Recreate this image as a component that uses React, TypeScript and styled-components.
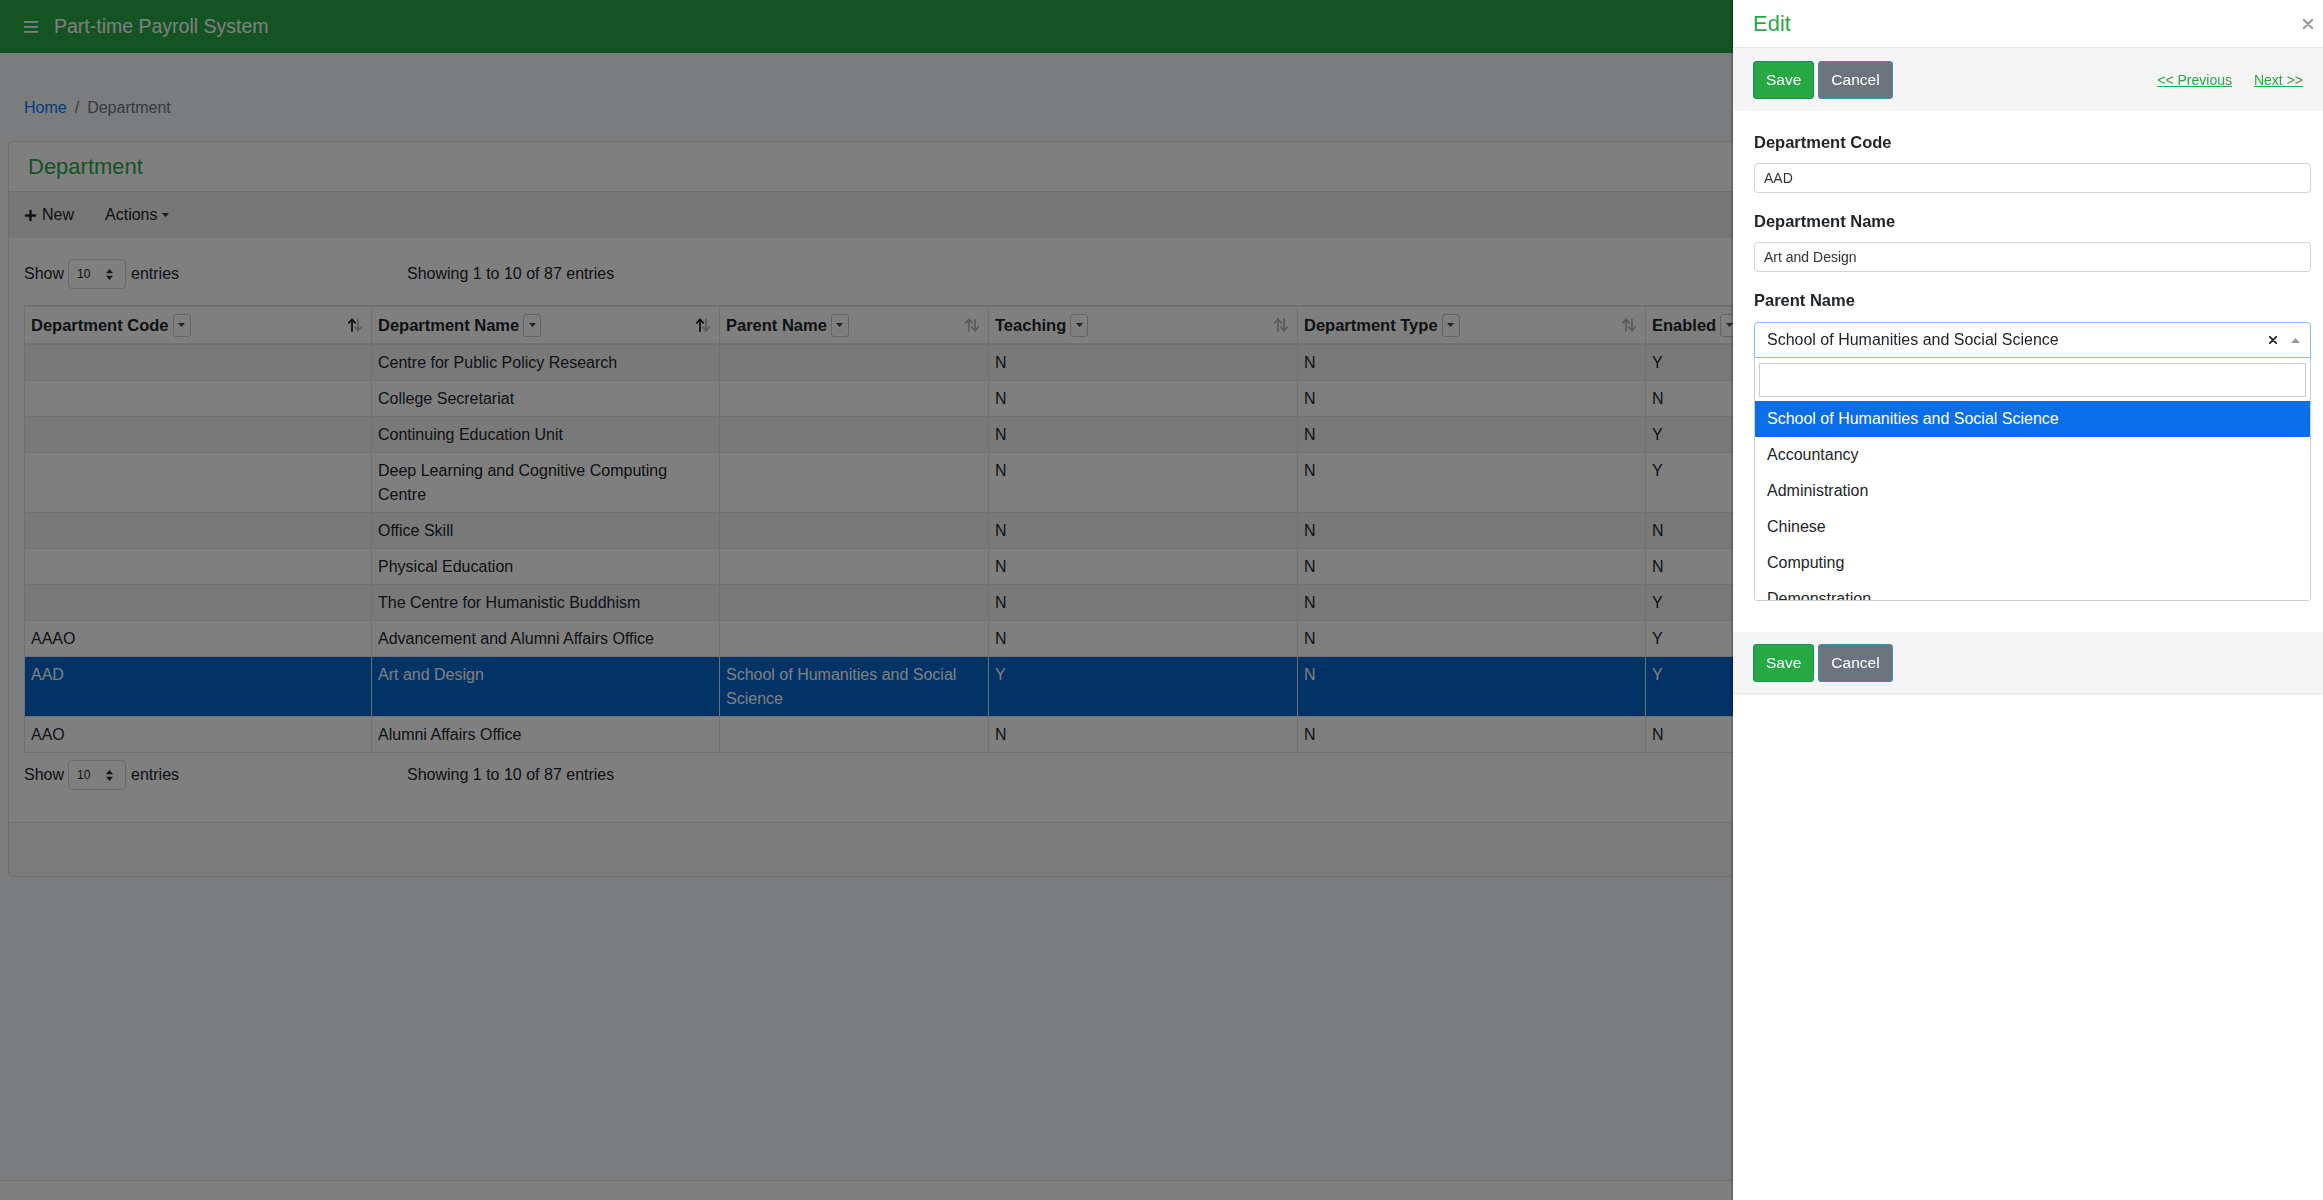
import React from 'react';
import styled, { createGlobalStyle } from 'styled-components';
import { FaPlus } from 'react-icons/fa';

const GlobalStyle = createGlobalStyle`
  html, body {
    margin: 0;
    padding: 0;
  }
  body {
    font-family: "Liberation Sans", Arial, Helvetica, sans-serif;
    font-size: 16px;
    color: #212529;
    background: #f6f8fc;
  }
  * {
    box-sizing: border-box;
  }
`;

const Page = styled.div`
  min-height: 1200px;
  display: flex;
  flex-direction: column;
`;

const TopBar = styled.header`
  height: 53px;
  flex-shrink: 0;
  display: flex;
  align-items: center;
  gap: 16px;
  padding-left: 24px;
  background: #28a745;
  color: #fff;
`;

const Title = styled.div`
  font-size: 19.5px;
  color: #fff;
`;

const Main = styled.main`
  flex: 1;
  padding: 0 8px;
`;

const Breadcrumb = styled.nav`
  display: flex;
  align-items: center;
  padding: 43px 16px 12px;
  margin-bottom: 9px;
  line-height: 24px;
  color: #6c757d;

  a {
    color: #007bff;
    text-decoration: none;
  }
  .sep {
    padding: 0 8px;
  }
`;

const Card = styled.section`
  background: #fff;
  border: 1px solid rgba(0, 0, 0, 0.125);
  border-radius: 4px;
  overflow: hidden;
`;

const CardHeader = styled.div`
  height: 50px;
  display: flex;
  align-items: center;
  padding: 0 19px;
  border-bottom: 1px solid rgba(0, 0, 0, 0.125);
  font-size: 22px;
  color: #28a745;
`;

const Toolbar = styled.div`
  height: 46px;
  display: flex;
  align-items: center;
  gap: 31px;
  padding: 0 15px;
  background: #eeeeee;
`;

const ToolButton = styled.span`
  display: inline-flex;
  align-items: center;
  gap: 5px;
  color: #222;
  font-size: 16px;
`;

const CardBody = styled.div`
  padding: 21px 15px 32px;
`;

const CardFooter = styled.div`
  height: 54px;
  background: #f7f7f7;
  border-top: 1px solid rgba(0, 0, 0, 0.08);
`;

const LengthRow = styled.div<{ $gap: number }>`
  display: grid;
  grid-template-columns: 383px 1fr;
  align-items: center;
  height: 30px;
  margin-top: ${(p) => p.$gap}px;
  font-size: 16px;
`;

const LengthLeft = styled.div`
  display: flex;
  align-items: center;
  gap: 4px;

  .after {
    margin-left: 1px;
  }
`;

const LengthSelect = styled.div`
  width: 58px;
  height: 30px;
  display: flex;
  align-items: center;
  justify-content: space-between;
  padding: 0 12px 0 8px;
  border: 1px solid #ced4da;
  border-radius: 4px;
  background: #fff;
  font-size: 12px;
`;

const Table = styled.table`
  width: 100%;
  margin-top: 16px;
  table-layout: fixed;
  border-collapse: collapse;
  font-size: 16px;
  line-height: 24px;
`;

const Th = styled.th`
  padding: 6px 8px 6px 6px;
  border: 1px solid #dee2e6;
  border-top: 2px solid #dee2e6;
  border-bottom: 2px solid #dee2e6;
  text-align: left;
  font-size: 16.5px;
  font-weight: bold;
  vertical-align: middle;
  background: #fff;
  white-space: nowrap;
`;

const ThInner = styled.div`
  display: flex;
  align-items: center;
  gap: 4px;
`;

const FilterBox = styled.span`
  width: 18px;
  height: 23px;
  flex-shrink: 0;
  display: inline-flex;
  align-items: center;
  justify-content: center;
  border: 1px solid #c8c8c8;
  border-radius: 3px;
`;

const SortSlot = styled.span`
  margin-left: auto;
  display: inline-flex;
`;

const Tr = styled.tr<{ $striped?: boolean; $selected?: boolean }>`
  background: ${(p) => (p.$selected ? '#0466cc' : p.$striped ? '#f3f3f3' : '#fff')};
  color: ${(p) => (p.$selected ? '#fff' : '#212529')};
`;

const Td = styled.td`
  padding: 5.5px 6px;
  border: 1px solid #dee2e6;
  vertical-align: top;
`;

const PageFooter = styled.footer`
  height: 20px;
  background: #fff;
  border-top: 1px solid #dee2e6;
`;

const Overlay = styled.div`
  position: fixed;
  inset: 0;
  background: rgba(0, 0, 0, 0.5);
  z-index: 10;
`;

const Panel = styled.aside`
  position: fixed;
  top: 0;
  right: 0;
  width: 590px;
  height: 100vh;
  background: #fff;
  z-index: 20;
  display: flex;
  flex-direction: column;
  box-shadow: -1px 0 2px rgba(0, 0, 0, 0.35);
`;

const PanelHeader = styled.div`
  height: 48px;
  flex-shrink: 0;
  display: flex;
  align-items: center;
  justify-content: space-between;
  padding: 0 10px 0 20px;
  border-bottom: 1px solid #e5e5e5;
  font-size: 22px;
  color: #28a745;
`;

const PanelBar = styled.div<{ $height: number }>`
  height: ${(p) => p.$height}px;
  flex-shrink: 0;
  display: flex;
  align-items: center;
  justify-content: space-between;
  padding: 0 20px;
  background: #f5f5f5;
`;

const FooterBar = styled(PanelBar)`
  box-shadow: 0 1px 2px rgba(0, 0, 0, 0.15);
`;

const ButtonGroup = styled.div`
  display: flex;
  gap: 4px;
`;

const Button = styled.button<{ $variant: 'save' | 'cancel' }>`
  height: 38px;
  padding: 0 12px;
  border-radius: 3px;
  border: 1px solid ${(p) => (p.$variant === 'save' ? '#1f8f63' : '#3f8db5')};
  background: ${(p) => (p.$variant === 'save' ? '#28a745' : '#6c757d')};
  color: #fff;
  font-family: inherit;
  font-size: 15.5px;
`;

const NavLinks = styled.div`
  display: flex;
  gap: 22px;
  font-size: 14px;

  a {
    color: #28a745;
    text-decoration: underline;
  }
`;

const PanelBody = styled.div`
  min-height: 521px;
  flex-shrink: 0;
  padding: 20px 12px 20px 21px;
`;

const Field = styled.div`
  margin-bottom: 17px;
`;

const Label = styled.label<{ $tight?: boolean }>`
  display: block;
  font-size: 16.5px;
  font-weight: bold;
  line-height: 22px;
  color: #212529;
  margin-bottom: ${(p) => (p.$tight ? 0 : 10)}px;
`;

const TextInput = styled.div`
  height: 30px;
  display: flex;
  align-items: center;
  padding: 0 9px;
  border: 1px solid #ced4da;
  border-radius: 4px;
  font-size: 14px;
  color: #333;
`;

const SelectWrap = styled.div`
  position: relative;
  margin-top: 11px;
`;

const SelectBox = styled.div`
  height: 36px;
  display: flex;
  align-items: center;
  gap: 14px;
  padding: 0 10px 0 12px;
  border: 1px solid #80bdff;
  border-radius: 4px 4px 0 0;
  font-size: 16px;
  color: #212529;

  .value {
    flex: 1;
  }
`;

const Dropdown = styled.div`
  position: absolute;
  top: 100%;
  left: 0;
  right: 0;
  z-index: 5;
  background: #fff;
  border: 1px solid #c9ced6;
  border-top: none;
  border-radius: 0 0 4px 4px;
  padding-top: 5px;
`;

const Search = styled.div`
  height: 34px;
  margin: 0 4px 4px;
  border: 1px solid #c9ccd2;
`;

const OptionList = styled.ul`
  list-style: none;
  margin: 0;
  padding: 0;
  height: 199px;
  overflow: hidden;
`;

const Option = styled.li<{ $active?: boolean }>`
  padding: 6px 12px;
  line-height: 24px;
  font-size: 16px;
  background: ${(p) => (p.$active ? '#0a6ee8' : '#fff')};
  color: ${(p) => (p.$active ? '#fff' : '#212529')};
`;

const Hamburger = () => (
  <svg width="14" height="12" viewBox="0 0 14 12">
    <rect x="0" y="0" width="14" height="1.8" fill="#fff" />
    <rect x="0" y="5" width="14" height="1.8" fill="#fff" />
    <rect x="0" y="10" width="14" height="1.8" fill="#fff" />
  </svg>
);

const Caret = ({ color = '#444' }: { color?: string }) => (
  <svg width="7" height="4" viewBox="0 0 7 4">
    <path d="M0 0 L7 0 L3.5 4 Z" fill={color} />
  </svg>
);

const SortIcon = ({ active }: { active: boolean }) => (
  <svg width="16" height="14" viewBox="0 0 16 14">
    <g fill="none" strokeWidth="1.8" strokeLinecap="round" strokeLinejoin="round">
      <g stroke={active ? '#222' : '#b5b5b5'}>
        <path d="M5 13 L5 1.5" />
        <path d="M1.8 4.8 L5 1.4 L8.2 4.8" />
      </g>
      <g stroke="#b5b5b5">
        <path d="M11 1.5 L11 12.5" />
        <path d="M7.8 9.2 L11 12.6 L14.2 9.2" />
      </g>
    </g>
  </svg>
);

const UpDown = () => (
  <svg width="7" height="11" viewBox="0 0 7 11">
    <path d="M0 4.2 L3.5 0 L7 4.2 Z" fill="#333" />
    <path d="M0 6.8 L3.5 11 L7 6.8 Z" fill="#333" />
  </svg>
);

const CloseIcon = ({ size, color }: { size: number; color: string }) => (
  <svg width={size} height={size} viewBox="0 0 10 10">
    <path d="M1 1 L9 9 M9 1 L1 9" stroke={color} strokeWidth="2.2" strokeLinecap="round" />
  </svg>
);

const UpTriangle = () => (
  <svg width="9" height="5" viewBox="0 0 9 5">
    <path d="M0 5 L4.5 0 L9 5 Z" fill="#999" />
  </svg>
);

const columns = [
  { title: 'Department Code', width: 347, sorted: true },
  { title: 'Department Name', width: 348, sorted: true },
  { title: 'Parent Name', width: 269, sorted: false },
  { title: 'Teaching', width: 309, sorted: false },
  { title: 'Department Type', width: 348, sorted: false },
  { title: 'Enabled', width: undefined, sorted: false },
];

const rows = [
  ['', 'Centre for Public Policy Research', '', 'N', 'N', 'Y'],
  ['', 'College Secretariat', '', 'N', 'N', 'N'],
  ['', 'Continuing Education Unit', '', 'N', 'N', 'Y'],
  ['', 'Deep Learning and Cognitive Computing Centre', '', 'N', 'N', 'Y'],
  ['', 'Office Skill', '', 'N', 'N', 'N'],
  ['', 'Physical Education', '', 'N', 'N', 'N'],
  ['', 'The Centre for Humanistic Buddhism', '', 'N', 'N', 'Y'],
  ['AAAO', 'Advancement and Alumni Affairs Office', '', 'N', 'N', 'Y'],
  ['AAD', 'Art and Design', 'School of Humanities and Social Science', 'Y', 'N', 'Y'],
  ['AAO', 'Alumni Affairs Office', '', 'N', 'N', 'N'],
];

const parents = [
  'School of Humanities and Social Science',
  'Accountancy',
  'Administration',
  'Chinese',
  'Computing',
  'Demonstration',
];

const LengthControl = ({ gap }: { gap: number }) => (
  <LengthRow $gap={gap}>
    <LengthLeft>
      <span>Show</span>
      <LengthSelect>
        <span>10</span>
        <UpDown />
      </LengthSelect>
      <span className="after">entries</span>
    </LengthLeft>
    <div>Showing 1 to 10 of 87 entries</div>
  </LengthRow>
);

const App = () => {
  return (
    <>
      <GlobalStyle />
      <Page>
        <TopBar>
          <Hamburger />
          <Title>Part-time Payroll System</Title>
        </TopBar>
        <Main>
          <Breadcrumb>
            <a href="#">Home</a>
            <span className="sep">/</span>
            <span>Department</span>
          </Breadcrumb>
          <Card>
            <CardHeader>Department</CardHeader>
            <Toolbar>
              <ToolButton>
                <FaPlus size={13} />
                New
              </ToolButton>
              <ToolButton>
                Actions
                <Caret color="#333" />
              </ToolButton>
            </Toolbar>
            <CardBody>
              <LengthControl gap={0} />
              <Table>
                <colgroup>
                  {columns.map((c) => (
                    <col key={c.title} style={c.width ? { width: c.width } : undefined} />
                  ))}
                </colgroup>
                <thead>
                  <tr>
                    {columns.map((c) => (
                      <Th key={c.title}>
                        <ThInner>
                          <span>{c.title}</span>
                          <FilterBox>
                            <Caret />
                          </FilterBox>
                          {c.title !== 'Enabled' && (
                            <SortSlot>
                              <SortIcon active={c.sorted} />
                            </SortSlot>
                          )}
                        </ThInner>
                      </Th>
                    ))}
                  </tr>
                </thead>
                <tbody>
                  {rows.map((r, i) => (
                    <Tr key={i} $striped={i % 2 === 0} $selected={r[0] === 'AAD'}>
                      {r.map((cell, j) => (
                        <Td key={j}>{cell}</Td>
                      ))}
                    </Tr>
                  ))}
                </tbody>
              </Table>
              <LengthControl gap={7} />
            </CardBody>
            <CardFooter />
          </Card>
        </Main>
        <PageFooter />
      </Page>

      <Overlay />

      <Panel>
        <PanelHeader>
          <span>Edit</span>
          <CloseIcon size={10} color="#9a9a9a" />
        </PanelHeader>
        <PanelBar $height={63}>
          <ButtonGroup>
            <Button $variant="save">Save</Button>
            <Button $variant="cancel">Cancel</Button>
          </ButtonGroup>
          <NavLinks>
            <a href="#">&lt;&lt; Previous</a>
            <a href="#">Next &gt;&gt;</a>
          </NavLinks>
        </PanelBar>
        <PanelBody>
          <Field>
            <Label>Department Code</Label>
            <TextInput>AAD</TextInput>
          </Field>
          <Field>
            <Label>Department Name</Label>
            <TextInput>Art and Design</TextInput>
          </Field>
          <Field>
            <Label $tight>Parent Name</Label>
            <SelectWrap>
              <SelectBox>
                <span className="value">School of Humanities and Social Science</span>
                <CloseIcon size={8} color="#222" />
                <UpTriangle />
              </SelectBox>
              <Dropdown>
                <Search />
                <OptionList>
                  {parents.map((p, i) => (
                    <Option key={p} $active={i === 0}>
                      {p}
                    </Option>
                  ))}
                </OptionList>
              </Dropdown>
            </SelectWrap>
          </Field>
        </PanelBody>
        <FooterBar $height={61}>
          <ButtonGroup>
            <Button $variant="save">Save</Button>
            <Button $variant="cancel">Cancel</Button>
          </ButtonGroup>
        </FooterBar>
      </Panel>
    </>
  );
};

export default App;
